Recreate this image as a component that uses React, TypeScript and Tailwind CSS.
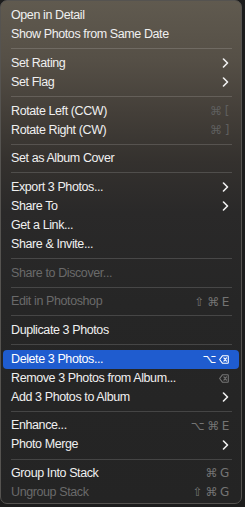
import React from "react";

type Item =
	| { sep: true }
	| {
			sep?: false;
			label: string;
			keys?: string[];
			sub?: boolean;
			disabled?: boolean;
			active?: boolean;
			dimKeys?: boolean;
	  };

const items: Item[] = [
	{ label: "Open in Detail" },
	{ label: "Show Photos from Same Date" },
	{ sep: true },
	{ label: "Set Rating", sub: true },
	{ label: "Set Flag", sub: true },
	{ sep: true },
	{ label: "Rotate Left (CCW)", keys: ["⌘", "["], dimKeys: true },
	{ label: "Rotate Right (CW)", keys: ["⌘", "]"], dimKeys: true },
	{ sep: true },
	{ label: "Set as Album Cover" },
	{ sep: true },
	{ label: "Export 3 Photos...", sub: true },
	{ label: "Share To", sub: true },
	{ label: "Get a Link..." },
	{ label: "Share & Invite..." },
	{ sep: true },
	{ label: "Share to Discover...", disabled: true },
	{ sep: true },
	{ label: "Edit in Photoshop", keys: ["⇧", "⌘", "E"], disabled: true },
	{ sep: true },
	{ label: "Duplicate 3 Photos" },
	{ sep: true },
	{ label: "Delete 3 Photos...", keys: ["⌥", "del"], active: true },
	{ label: "Remove 3 Photos from Album...", keys: ["del"] },
	{ label: "Add 3 Photos to Album", sub: true },
	{ sep: true },
	{ label: "Enhance...", keys: ["⌥", "⌘", "E"] },
	{ label: "Photo Merge", sub: true },
	{ sep: true },
	{ label: "Group Into Stack", keys: ["⌘", "G"] },
	{ label: "Ungroup Stack", keys: ["⇧", "⌘", "G"], disabled: true },
];

const Chevron = () => (
	<svg width="7" height="10" viewBox="0 0 7 10" className="shrink-0">
		<polyline points="1.5,1 5.5,5 1.5,9" fill="none" stroke="#f2f2f2" strokeWidth="1.6" strokeLinecap="round" strokeLinejoin="round" />
	</svg>
);

// the delete key glyph, drawn because the font's one is too wide
const DeleteKey = () => (
	<svg width="10" height="9" viewBox="0 0 10 9" className="shrink-0">
		<path d="M3.4 0.8 H8.6 Q9.3 0.8 9.3 1.5 V7.5 Q9.3 8.2 8.6 8.2 H3.4 L0.6 4.5 Z" fill="none" stroke="currentColor" strokeWidth="1.1" strokeLinejoin="round" />
		<path d="M4.9 2.9 L7.5 6.1 M7.5 2.9 L4.9 6.1" stroke="currentColor" strokeWidth="1.1" strokeLinecap="round" />
	</svg>
);

const Keys = ({ keys, tone }: { keys: string[]; tone: string }) => (
	<span className={`flex items-center gap-[3px] text-[12px] ${tone}`} style={{ fontFamily: '"DejaVu Sans", sans-serif' }}>
		{keys.map((k, i) =>
			k === "del" ? (
				<DeleteKey key={i} />
			) : (
				<span key={i} className="leading-none">{k}</span>
			)
		)}
	</span>
);

export default function App() {
	return (
		<div className="w-[245px] h-[507px] bg-[#1c1c1c] overflow-hidden">
			<div
				className="w-[242px] h-[504px] rounded-[7px] border border-[#555350] pt-[5px] overflow-hidden bg-[linear-gradient(180deg,#605a4f_0%,#554f46_12%,#443f39_22%,#34312e_32%,#2a2929_42%,#262626_60%,#242424_100%)]"
				style={{ fontFamily: '"Liberation Sans", Arial, sans-serif' }}
			>
				{items.map((it, i) => {
					if (it.sep) {
						return (
							<div key={i} className="h-[9.7px] flex items-center pl-[10px] pr-[9px]">
								<div className="h-px w-full bg-white/15" />
							</div>
						);
					}
					const text = it.active ? "text-white" : it.disabled ? "text-[#6a6a6a]" : "text-[#f0f0f0]";
					const keyTone = it.active ? "text-white" : it.dimKeys ? "text-[#5f5f5f]" : "text-[#747474]";
					return (
						<div
							key={i}
							className={`h-[19px] flex items-center justify-between text-[12.5px] tracking-[-0.4px] ${
								it.active ? "mx-[2px] px-[8px] pr-[10px] rounded-[4px] bg-[#1f5ccf]" : "pl-[10px] pr-[12px]"
							}`}
						>
							<span className={text}>{it.label}</span>
							{it.sub && <Chevron />}
							{it.keys && <Keys keys={it.keys} tone={keyTone} />}
						</div>
					);
				})}
			</div>
		</div>
	);
}
